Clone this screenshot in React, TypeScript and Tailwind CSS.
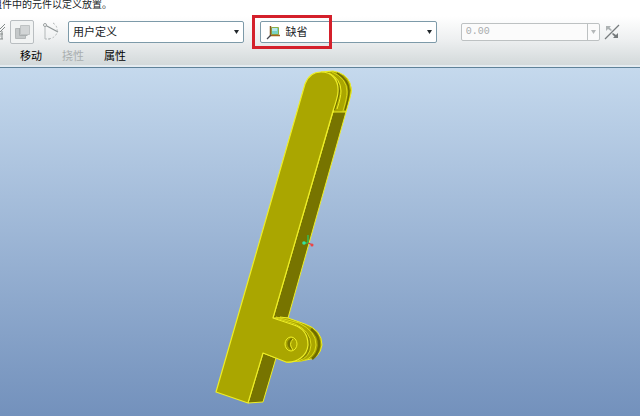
import { useState } from 'react';

const fontStack = "font-['Liberation_Sans','Noto_Sans_CJK_SC',sans-serif]";

const tabs = [
  { label: '移动', disabled: false },
  { label: '挠性', disabled: true },
  { label: '属性', disabled: false },
];

function BrushIcon() {
  return (
    <svg width="6" height="20" viewBox="0 0 6 20" fill="none" stroke="#858b8b" className="shrink-0">
      <path d="M0 7L5 2M0 10L5 5M0 12h3M2 9v8M0 17h3" />
      <path d="M0 14h2" stroke="#b1b6b6" />
    </svg>
  );
}

function WindowsIcon() {
  return (
    <svg width="16" height="16" viewBox="0 0 16 16" className="shrink-0">
      <path d="M1.500 4.500h10v10h-10z" fill="#c4c8c9" stroke="#b4b8b9" />
      <path d="M6.500 1.500h9v9h-9z" fill="#d2d5d6" stroke="#bec2c3" />
      <path d="M5.500 4v7.500h8" fill="none" stroke="#aaafb0" />
    </svg>
  );
}

function ConstraintIcon() {
  return (
    <svg width="18" height="20" viewBox="0 0 18 20" fill="none" className="shrink-0">
      <path d="M3 3v14" stroke="#b3b8b9" />
      <path d="M3 3l13 7" stroke="#8f9596" strokeWidth="1.200" />
      <path d="M11 1q5 3 4 9t-9 7" stroke="#aeb3b4" strokeDasharray="2 2" />
      <circle cx="3" cy="3" r="1.500" fill="#fff" stroke="#9aa0a1" />
      <path d="M3 17h5" stroke="#b3b8b9" strokeDasharray="2 1" />
    </svg>
  );
}

function DefaultIcon() {
  return (
    <svg width="15" height="16" viewBox="0 0 15 16" fill="none">
      <path d="M5.500 2.500h7v7h-7z" fill="#79d3c4" stroke="#8cae45" />
      <path d="M6 3h5v3H6z" fill="#b2e7ee" />
      <path d="M4.500 1v10" stroke="#8b5a20" strokeWidth="1.500" />
      <path d="M4 10.500h10" stroke="#a3641f" strokeWidth="1.500" />
      <path d="M5 10l-4 4" stroke="#46474f" strokeWidth="1.200" />
    </svg>
  );
}

function FlipIcon() {
  return (
    <svg width="16" height="16" viewBox="0 0 16 16" fill="none">
      <path d="M1 15L15 1" stroke="#777c7e" strokeWidth="1.200" />
      <path d="M2 2h5L5.500 3.500 8 6 7 7 4 5 2 7z" fill="#adb2b3" />
      <path d="M14 14H9l1.500-1.500L8 10l1-1 3 2 2-2z" fill="#74797b" />
    </svg>
  );
}

function Caret({ className }: { className: string }) {
  return (
    <svg width="7" height="4" viewBox="0 0 7 4" className={className}>
      <path d="M1 0h5L3.500 4z" fill="currentColor" />
    </svg>
  );
}

function ModelDrawing() {
  return (
    <svg
      viewBox="0 68 640 348"
      className="block h-full w-full"
      stroke="#eeee26"
      strokeLinejoin="round"
      role="img"
      aria-label="model"
    >
      {/* rear fork plate */}
      <path d="M321 72L333 71Q346 73 350 83Q353 90 350 98L346 112L333 113L337 97Q339 78 321 72Z" fill="#aaa600" />
      <path d="M337 73Q349 80 349 91Q349 97 345 110" fill="none" stroke="#6e6b00" strokeWidth="1.500" />
      <path d="M332 72Q347 78 347 92Q347 98 343 111" fill="none" stroke="#d8d614" />
      <path d="M327 74Q339 80 339 91Q338 98 334 110" fill="none" stroke="#6e6b00" strokeWidth="2" />
      <path d="M329 73Q341 79 341 91Q341 97 337 109" fill="none" />

      {/* side faces of the bar */}
      <path d="M333 112L346 112L288 318L273 318Z" fill="#777400" />
      <path d="M263 353L276 358L263 402L248 403Z" fill="#777400" />

      {/* rear lugs */}
      <path d="M280 317L288 318L305 324Q322 330 322 345Q320 359 306 360L288 362Z" fill="#aaa600" />
      <path d="M311 329Q320 336 319 346Q318 354 312 359" fill="none" stroke="#6e6b00" strokeWidth="2.500" />
      <path d="M276 317L299 323Q316 331 316 345Q315 358 302 361L286 362Z" fill="#aaa600" stroke="#dcda18" />
      <path d="M276 318L295 324Q311 331 311 345Q310 358 298 361L286 362Z" fill="#8a8700" stroke="#dcda18" />

      {/* front plate with its lug */}
      <path
        d="M305 84C308 76 314 72 321 72C332 72 339 80 338 92Q338 96 333 111L273 318L294 325C303 328 308 335 308 345C307 356 297 363 286 362L263 353L248 403L216 392Z"
        fill="#aaa600"
        strokeWidth="1.200"
      />
      <ellipse cx="291" cy="344" rx="6" ry="7" fill="#aaa600" />
      <path d="M291 338Q284 343 290 349L293 350Q288 345 293 339Z" fill="#777400" stroke="none" />
      <path d="M293 339Q288 344 293 350" fill="none" />

      {/* origin triad */}
      <g fill="none" strokeWidth="1.200">
        <path d="M303 243h5v-8" stroke="#23ce68" />
        <path d="M308 243l5 2" stroke="#e03b3b" />
        <circle cx="304" cy="243" r="1.800" fill="#35e4a0" stroke="none" />
        <circle cx="312" cy="245" r="1.500" fill="#ee4444" stroke="none" />
      </g>
    </svg>
  );
}

export default function App() {
  const [kind, setKind] = useState('用户定义');
  const [constraint, setConstraint] = useState('缺省');

  return (
    <div className={`flex min-h-screen flex-col overflow-hidden text-[11px] text-[#202326] ${fontStack}`}>
      <header className="bg-linear-to-b from-white from-25% via-[#eef0f1] via-60% to-[#d3d9da]">
        <p className="-ml-2 text-[10px] leading-[10px] whitespace-nowrap">组件中的元件以定义放置。</p>

        <div className="flex items-center pt-2.5">
          <BrushIcon />
          <button
            type="button"
            aria-label="窗口"
            className="ml-1 flex size-6 shrink-0 items-center justify-center rounded-xs border border-[#b9bec1] bg-[#f1f3f3]"
          >
            <WindowsIcon />
          </button>
          <div className="mx-2 shrink-0">
            <ConstraintIcon />
          </div>

          <div className="relative flex-[9]">
            <select
              aria-label="连接类型"
              value={kind}
              onChange={(e) => setKind(e.target.value)}
              className="block h-[22px] w-full appearance-none rounded-xs border border-[#7d9aa9] bg-white pl-1 leading-4"
            >
              <option>用户定义</option>
            </select>
            <Caret className="pointer-events-none absolute top-[9px] right-1 text-[#22282c]" />
          </div>

          <div className="relative ml-4 flex-[9]">
            <select
              aria-label="约束类型"
              value={constraint}
              onChange={(e) => setConstraint(e.target.value)}
              className="block h-[22px] w-full appearance-none rounded-xs border border-[#7d9aa9] bg-white pl-6 leading-4"
            >
              <option>缺省</option>
            </select>
            <div className="pointer-events-none absolute top-1 left-1.5">
              <DefaultIcon />
            </div>
            <Caret className="pointer-events-none absolute top-[9px] right-1 text-[#22282c]" />
            <div className="pointer-events-none absolute -top-1.5 -left-2 h-[34px] w-20 border-3 border-[#d4202b]" />
          </div>

          <div className="ml-6 flex h-[18px] flex-[7] rounded-xs border border-[#bdc1c2] bg-[#fbfbfb] text-[#a9acad]">
            <input
              aria-label="偏移"
              disabled
              defaultValue="0.00"
              className="h-4 w-full min-w-0 flex-1 pl-1 font-['Liberation_Mono',monospace] text-[10px] leading-4"
            />
            <button
              type="button"
              disabled
              aria-label="偏移列表"
              className="flex w-3 shrink-0 items-center justify-center border-l border-[#bdc1c2]"
            >
              <Caret className="text-[#b5b8b9]" />
            </button>
          </div>
          <button type="button" aria-label="反向" className="mr-5 ml-1 shrink-0">
            <FlipIcon />
          </button>
        </div>

        <nav className="flex gap-5 pt-1 pb-px pl-5 leading-4 text-black">
          {tabs.map((tab) => (
            <button key={tab.label} type="button" disabled={tab.disabled} className="disabled:text-[#a9aeaf]">
              {tab.label}
            </button>
          ))}
        </nav>
      </header>

      <div className="h-[3px] border-b border-[#5f8299] bg-[#e4ebf0]" />

      <main className="flex-1 bg-linear-to-b from-[#c5d9ed] to-[#7391bc]">
        <ModelDrawing />
      </main>
    </div>
  );
}
